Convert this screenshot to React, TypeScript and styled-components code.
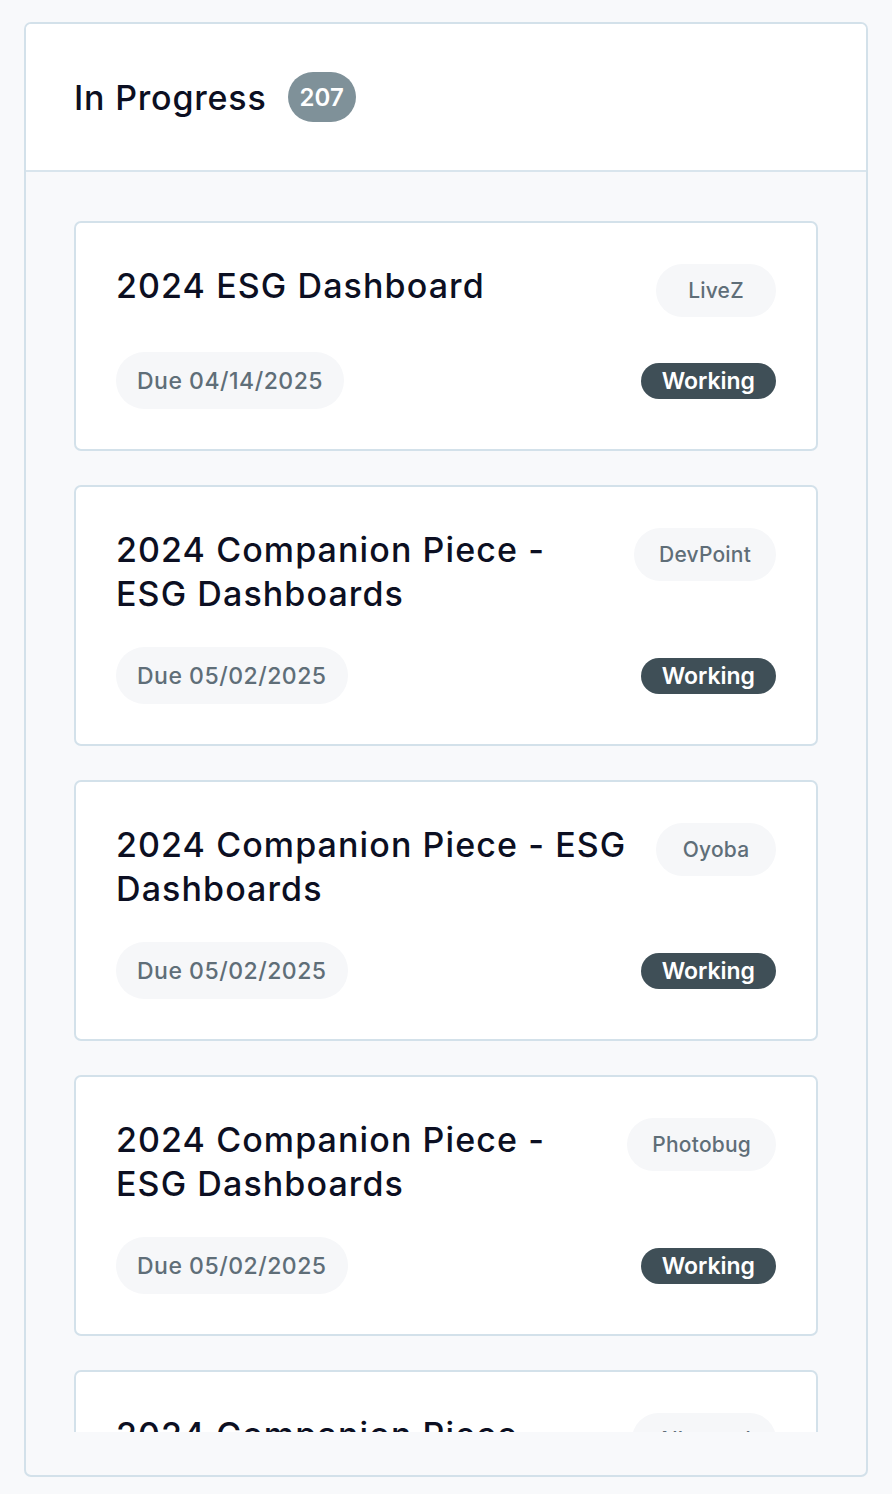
import React from 'react';
import styled, { createGlobalStyle } from 'styled-components';

const GlobalStyle = createGlobalStyle`
  html, body {
    margin: 0;
    padding: 0;
    background: #f8f9fb;
    font-family: Inter, 'Noto Sans', 'Liberation Sans', sans-serif;
  }
  * {
    box-sizing: border-box;
  }
`;

const Page = styled.div`
  padding: 22px 24px 17px 24px;
  min-height: 1494px;
`;

const Panel = styled.section`
  border: 2px solid #d3e1ea;
  border-radius: 7px;
  overflow: hidden;
  background: #f8f9fb;
`;

const PanelHeader = styled.header`
  height: 148px;
  background: #ffffff;
  border-bottom: 2px solid #d9e5ed;
  display: flex;
  align-items: center;
  gap: 21px;
  padding: 0 48px;
`;

const PanelTitle = styled.h2`
  margin: 0;
  font-size: 34px;
  font-weight: 500;
  letter-spacing: 0.8px;
  color: #0c0f22;
`;

const CountBadge = styled.span`
  display: inline-flex;
  align-items: center;
  justify-content: center;
  height: 50px;
  min-width: 66px;
  padding: 0 12px;
  border-radius: 25px;
  background: #7f9199;
  color: #ffffff;
  font-size: 24px;
  font-weight: 600;
`;

const PanelBody = styled.div`
  padding: 49px 48px 43px 48px;
`;

const CardList = styled.div`
  height: 1211px;
  overflow: hidden;
  display: flex;
  flex-direction: column;
  gap: 34px;
`;

const Card = styled.article`
  flex-shrink: 0;
  background: #ffffff;
  border: 2px solid #d3e1ea;
  border-radius: 7px;
  padding: 41px 40px 40px 40px;
`;

const CardTop = styled.div`
  display: flex;
  justify-content: space-between;
  align-items: flex-start;
  gap: 24px;
`;

const CardTitle = styled.h3`
  margin: 0;
  font-size: 34px;
  line-height: 44px;
  font-weight: 500;
  letter-spacing: 1.1px;
  color: #0c0f22;
`;

const ClientTag = styled.span`
  flex-shrink: 0;
  display: inline-flex;
  align-items: center;
  justify-content: center;
  min-width: 120px;
  height: 53px;
  margin-bottom: 4px;
  padding: 0 25px;
  border-radius: 27px;
  background: #f6f7f9;
  color: #5f6e78;
  font-size: 21px;
  font-weight: 500;
  letter-spacing: 0.2px;
`;

const CardBottom = styled.div`
  margin-top: 31px;
  display: flex;
  justify-content: space-between;
  align-items: center;
`;

const DueDate = styled.span`
  display: inline-flex;
  align-items: center;
  height: 57px;
  padding: 0 21px;
  border-radius: 29px;
  background: #f6f7f9;
  color: #5f6e78;
  font-size: 23px;
  font-weight: 500;
  letter-spacing: 0.5px;
`;

const StatusPill = styled.span<{ $tone?: string }>`
  display: inline-flex;
  align-items: center;
  height: 36px;
  padding: 0 21px;
  border-radius: 18px;
  background: ${(p) => p.$tone || '#3f4f57'};
  color: #ffffff;
  font-size: 23px;
  font-weight: 600;
`;

interface Task {
  title: string;
  client: string;
  due: string;
  status: string;
}

const tasks: Task[] = [
  { title: '2024 ESG Dashboard', client: 'LiveZ', due: '04/14/2025', status: 'Working' },
  { title: '2024 Companion Piece - ESG Dashboards', client: 'DevPoint', due: '05/02/2025', status: 'Working' },
  { title: '2024 Companion Piece - ESG Dashboards', client: 'Oyoba', due: '05/02/2025', status: 'Working' },
  { title: '2024 Companion Piece - ESG Dashboards', client: 'Photobug', due: '05/02/2025', status: 'Working' },
  { title: '2024 Companion Piece - ESG Dashboards', client: 'Allegrord', due: '05/02/2025', status: 'Working' },
];

export default function App() {
  return (
    <Page>
      <GlobalStyle />
      <Panel>
        <PanelHeader>
          <PanelTitle>In Progress</PanelTitle>
          <CountBadge>207</CountBadge>
        </PanelHeader>
        <PanelBody>
          <CardList>
            {tasks.map((task, i) => (
              <Card key={i}>
                <CardTop>
                  <CardTitle>{task.title}</CardTitle>
                  <ClientTag>{task.client}</ClientTag>
                </CardTop>
                <CardBottom>
                  <DueDate>Due {task.due}</DueDate>
                  <StatusPill>{task.status}</StatusPill>
                </CardBottom>
              </Card>
            ))}
          </CardList>
        </PanelBody>
      </Panel>
    </Page>
  );
}
